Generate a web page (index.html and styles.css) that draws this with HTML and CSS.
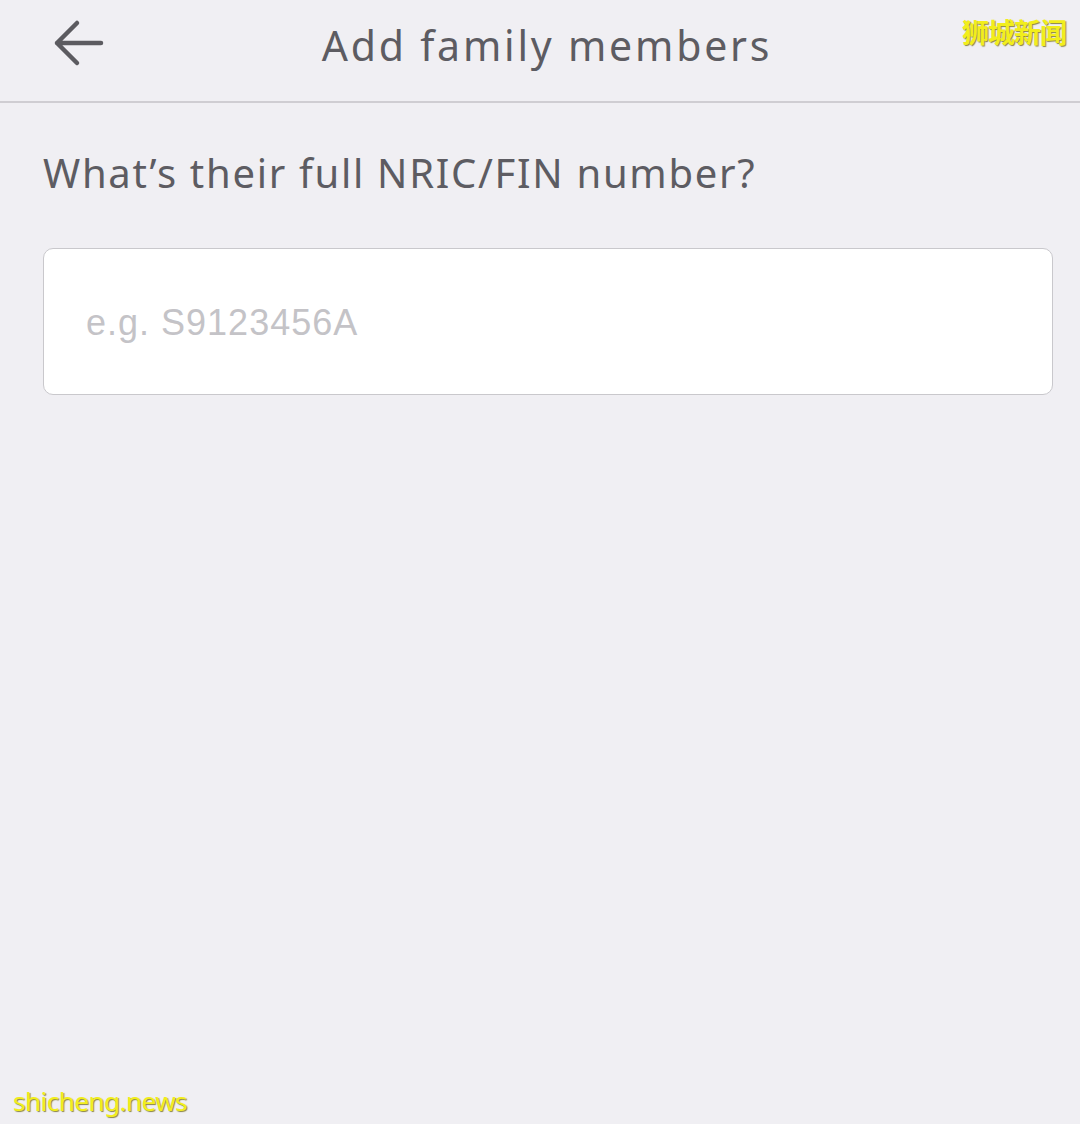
FILE: index.html
```html
<!DOCTYPE html>
<html>
<head>
<meta charset="utf-8">
<link rel="stylesheet" href="styles.css">
</head>
<body>
<div class="page">
  <header class="topbar">
    <button class="back" aria-label="Back">
      <svg width="52" height="48" viewBox="0 0 52 48"><path d="M24 4 L4 24 L24 44 M4 24 L48 24" fill="none" stroke="#5c5b60" stroke-width="4.5" stroke-linecap="round" stroke-linejoin="round"/></svg>
    </button>
    <h1 class="title">Add family members</h1>
    <span class="wm-top">狮城新闻</span>
  </header>
  <main class="content">
    <h2 class="question">What’s their full NRIC/FIN number?</h2>
    <div class="field"><span class="placeholder">e.g. S9123456A</span></div>
  </main>
  <footer class="wm-bottom">shicheng.news</footer>
</div>
</body>
</html>
```
FILE: styles.css
```css
* { box-sizing: border-box; }
html, body { margin: 0; padding: 0; }
body { background: #f0eff3; font-family: "Noto Sans", "Lato", sans-serif; }
.page { width: 1080px; height: 1124px; display: flex; flex-direction: column; position: relative; }
.topbar { height: 103px; border-bottom: 2px solid #cfcdd2; display: flex; align-items: center; justify-content: center; position: relative; }
.back { position: absolute; left: 53px; top: 19px; background: none; border: 0; padding: 0; width: 52px; height: 48px; }
.back svg { display: block; }
.title { margin: 0 0 12px 14px; font-weight: 400; font-size: 41px; color: #5d5c62; letter-spacing: 2.8px; }
.wm-top { position: absolute; right: 14px; top: 12px; font-family: "Noto Sans CJK SC", sans-serif; font-size: 27px; font-weight: 700; color: #f2ee1c; text-shadow: 1px 1px 1px #8a8440; letter-spacing: -1px; }
.content { padding: 0 27px 0 43px; }
.question { margin: 44px 0 0 0; font-weight: 400; font-size: 40px; color: #5d5c62; letter-spacing: 1.7px; line-height: 52px; }
.field { margin-top: 49px; height: 147px; background: #fff; border: 1.5px solid #c9c8cc; border-radius: 10px; display: flex; align-items: center; padding-left: 42px; }
.placeholder { font-family: "Liberation Sans", "Inter", sans-serif; font-size: 36px; color: #c4c3c7; letter-spacing: 1px; margin-top: 2px; }
.wm-bottom { position: absolute; left: 13px; bottom: 5px; font-family: "Noto Sans", sans-serif; font-size: 26px; color: #f2ee1c; text-shadow: 1px 1px 1px #8a8440; letter-spacing: -0.5px; }
```
